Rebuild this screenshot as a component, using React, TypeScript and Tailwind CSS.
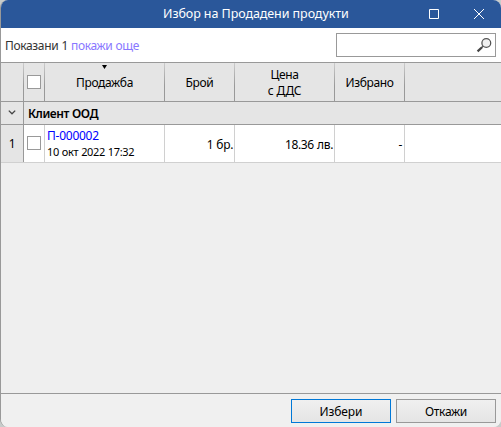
import { useState } from 'react'

const cell = 'flex shrink-0 items-center border-r'
const headCell = 'relative flex shrink-0 items-center justify-center bg-linear-to-b from-[#cccccc] to-[#999999] to-60% pr-px'
const headFill = 'flex h-full w-full items-center justify-center bg-[#e5e5e5]'

function Box({ checked, onChange }: { checked: boolean; onChange: () => void }) {
  return (
    <input
      type="checkbox"
      checked={checked}
      onChange={onChange}
      className="h-3.5 w-3.5 shrink-0 appearance-none border border-[#999999] bg-white checked:bg-[#2a579a]"
    />
  )
}

function SearchIcon() {
  return (
    <svg width="16" height="16" viewBox="0 0 16 16" fill="none">
      <circle cx="10.3" cy="6" r="4.4" fill="#f0f0f0" stroke="#555555" strokeWidth="1.3" />
      <path d="M7 9.3L5.8 10.5" stroke="#555555" strokeWidth="1.4" />
      <path d="M6 10.2L1.6 14.4" stroke="#444444" strokeWidth="2.2" />
    </svg>
  )
}

export default function App() {
  const [selected, setSelected] = useState(false)
  const [query, setQuery] = useState('')
  const toggle = () => setSelected(prev => !prev)

  return (
    <div className="h-[427px] w-[501px] bg-[#c8cccb]">
      <div className="flex h-full flex-col overflow-hidden rounded-lg border-l border-[#999999] bg-[#efefef] font-['Noto_Sans','Open_Sans',sans-serif] text-[12px] tracking-[-0.35px] text-black [word-spacing:0.4px]">
        <div className="flex h-7 shrink-0 items-center bg-[#2a579a] text-white">
          <div className="w-[90px]" />
          <h1 className="flex-1 whitespace-nowrap pl-[72px] text-[12.5px] tracking-[-0.07px] [word-spacing:0]">
            Избор на Продадени продукти
          </h1>
          <button className="flex w-[45px] justify-center">
            <svg width="10" height="10" viewBox="0 0 10 10" fill="none" stroke="currentColor">
              <path d="M.5.5h9v9h-9z" />
            </svg>
          </button>
          <button className="flex w-[45px] justify-center">
            <svg width="10" height="10" viewBox="0 0 10 10" fill="none" stroke="currentColor">
              <path d="M0 0l10 10M10 0L0 10" />
            </svg>
          </button>
        </div>

        <div className="flex h-[34px] shrink-0 items-center justify-between bg-white pl-1 pr-[5px]">
          <div className="flex gap-[3px] whitespace-nowrap pt-0.5 text-[#333333]">
            <span>Показани 1</span>
            <a href="#" className="text-[#8877ff]">покажи още</a>
          </div>
          <div className="flex h-6 w-40 items-center border border-[#999999] bg-white pr-[3px]">
            <input
              value={query}
              onChange={e => setQuery(e.target.value)}
              className="min-w-0 flex-1 px-1 outline-none"
            />
            <SearchIcon />
          </div>
        </div>

        <div className="flex h-10 shrink-0 border-y border-[#999999] bg-[#e5e5e5] text-center">
          <div className={`${headCell} w-[23px]`}>
            <div className={headFill} />
          </div>
          <div className={`${headCell} w-[21px]`}>
            <div className={headFill}>
              <Box checked={selected} onChange={toggle} />
            </div>
          </div>
          <div className={`${headCell} w-[120px]`}>
            <svg className="absolute left-[57px] top-0.5" width="5" height="4" viewBox="0 0 5 4">
              <path d="M0 0h5L2.5 4z" />
            </svg>
            <div className={`${headFill} pt-px`}>Продажба</div>
          </div>
          <div className={`${headCell} w-[70px]`}>
            <div className={`${headFill} pt-px`}>Брой</div>
          </div>
          <div className={`${headCell} w-[100px]`}>
            <div className={`${headFill} pt-px leading-4`}>
              Цена
              <br />с ДДС
            </div>
          </div>
          <div className={`${headCell} w-[70px]`}>
            <div className={`${headFill} pt-px`}>Избрано</div>
          </div>
        </div>

        <div className="flex h-[23px] shrink-0 border-b border-[#999999] bg-[#e5e5e5]">
          <div className={`${cell} w-[23px] justify-center border-[#999999] pb-0.5`}>
            <svg width="8" height="5" viewBox="0 0 8 5" fill="none" stroke="#444444" strokeWidth="1.3">
              <path d="M.8.6L4 3.8 7.2.6" />
            </svg>
          </div>
          <div className="flex items-center pl-1 pt-0.5 font-semibold tracking-[-0.45px]">Клиент ООД</div>
        </div>

        <div className="flex h-[38px] shrink-0 border-b border-[#d0d0d0] bg-white">
          <div className={`${cell} w-[23px] justify-center border-[#999999] bg-[#e5e5e5] pt-px`}>1</div>
          <div className={`${cell} w-[21px] justify-center border-[#d0d0d0] pb-px`}>
            <Box checked={selected} onChange={toggle} />
          </div>
          <div className={`${cell} w-[120px] border-[#d0d0d0] pl-0.5 pt-px`}>
            <div className="whitespace-nowrap leading-4">
              <a href="#" className="block tracking-[-0.25px] text-[#0000ff]">П-000002</a>
              <div className="text-[11px]">10 окт 2022 17:32</div>
            </div>
          </div>
          <div className={`${cell} w-[70px] justify-end border-[#d0d0d0] pr-px pt-0.5`}>1 бр.</div>
          <div className={`${cell} w-[100px] justify-end border-[#d0d0d0] pr-px pt-0.5`}>18.36 лв.</div>
          <div className={`${cell} w-[70px] justify-end border-[#d0d0d0] pr-0.5 pt-0.5`}>-</div>
        </div>

        <div className="flex-1" />

        <div className="flex h-[34px] shrink-0 justify-end gap-[5px] border-t border-[#999999] bg-[#f0f0f0] pr-[5px] pt-[5px]">
          <button className="h-6 w-[100px] border border-[#0078d7] bg-linear-to-b from-[#f0f0f0] to-[#e5e5e5] pt-0.5 tracking-[-0.1px]">
            Избери
          </button>
          <button className="h-6 w-[100px] border border-[#999999] bg-linear-to-b from-[#f0f0f0] to-[#e5e5e5] pt-0.5 tracking-[-0.3px]">
            Откажи
          </button>
        </div>
      </div>
    </div>
  )
}
